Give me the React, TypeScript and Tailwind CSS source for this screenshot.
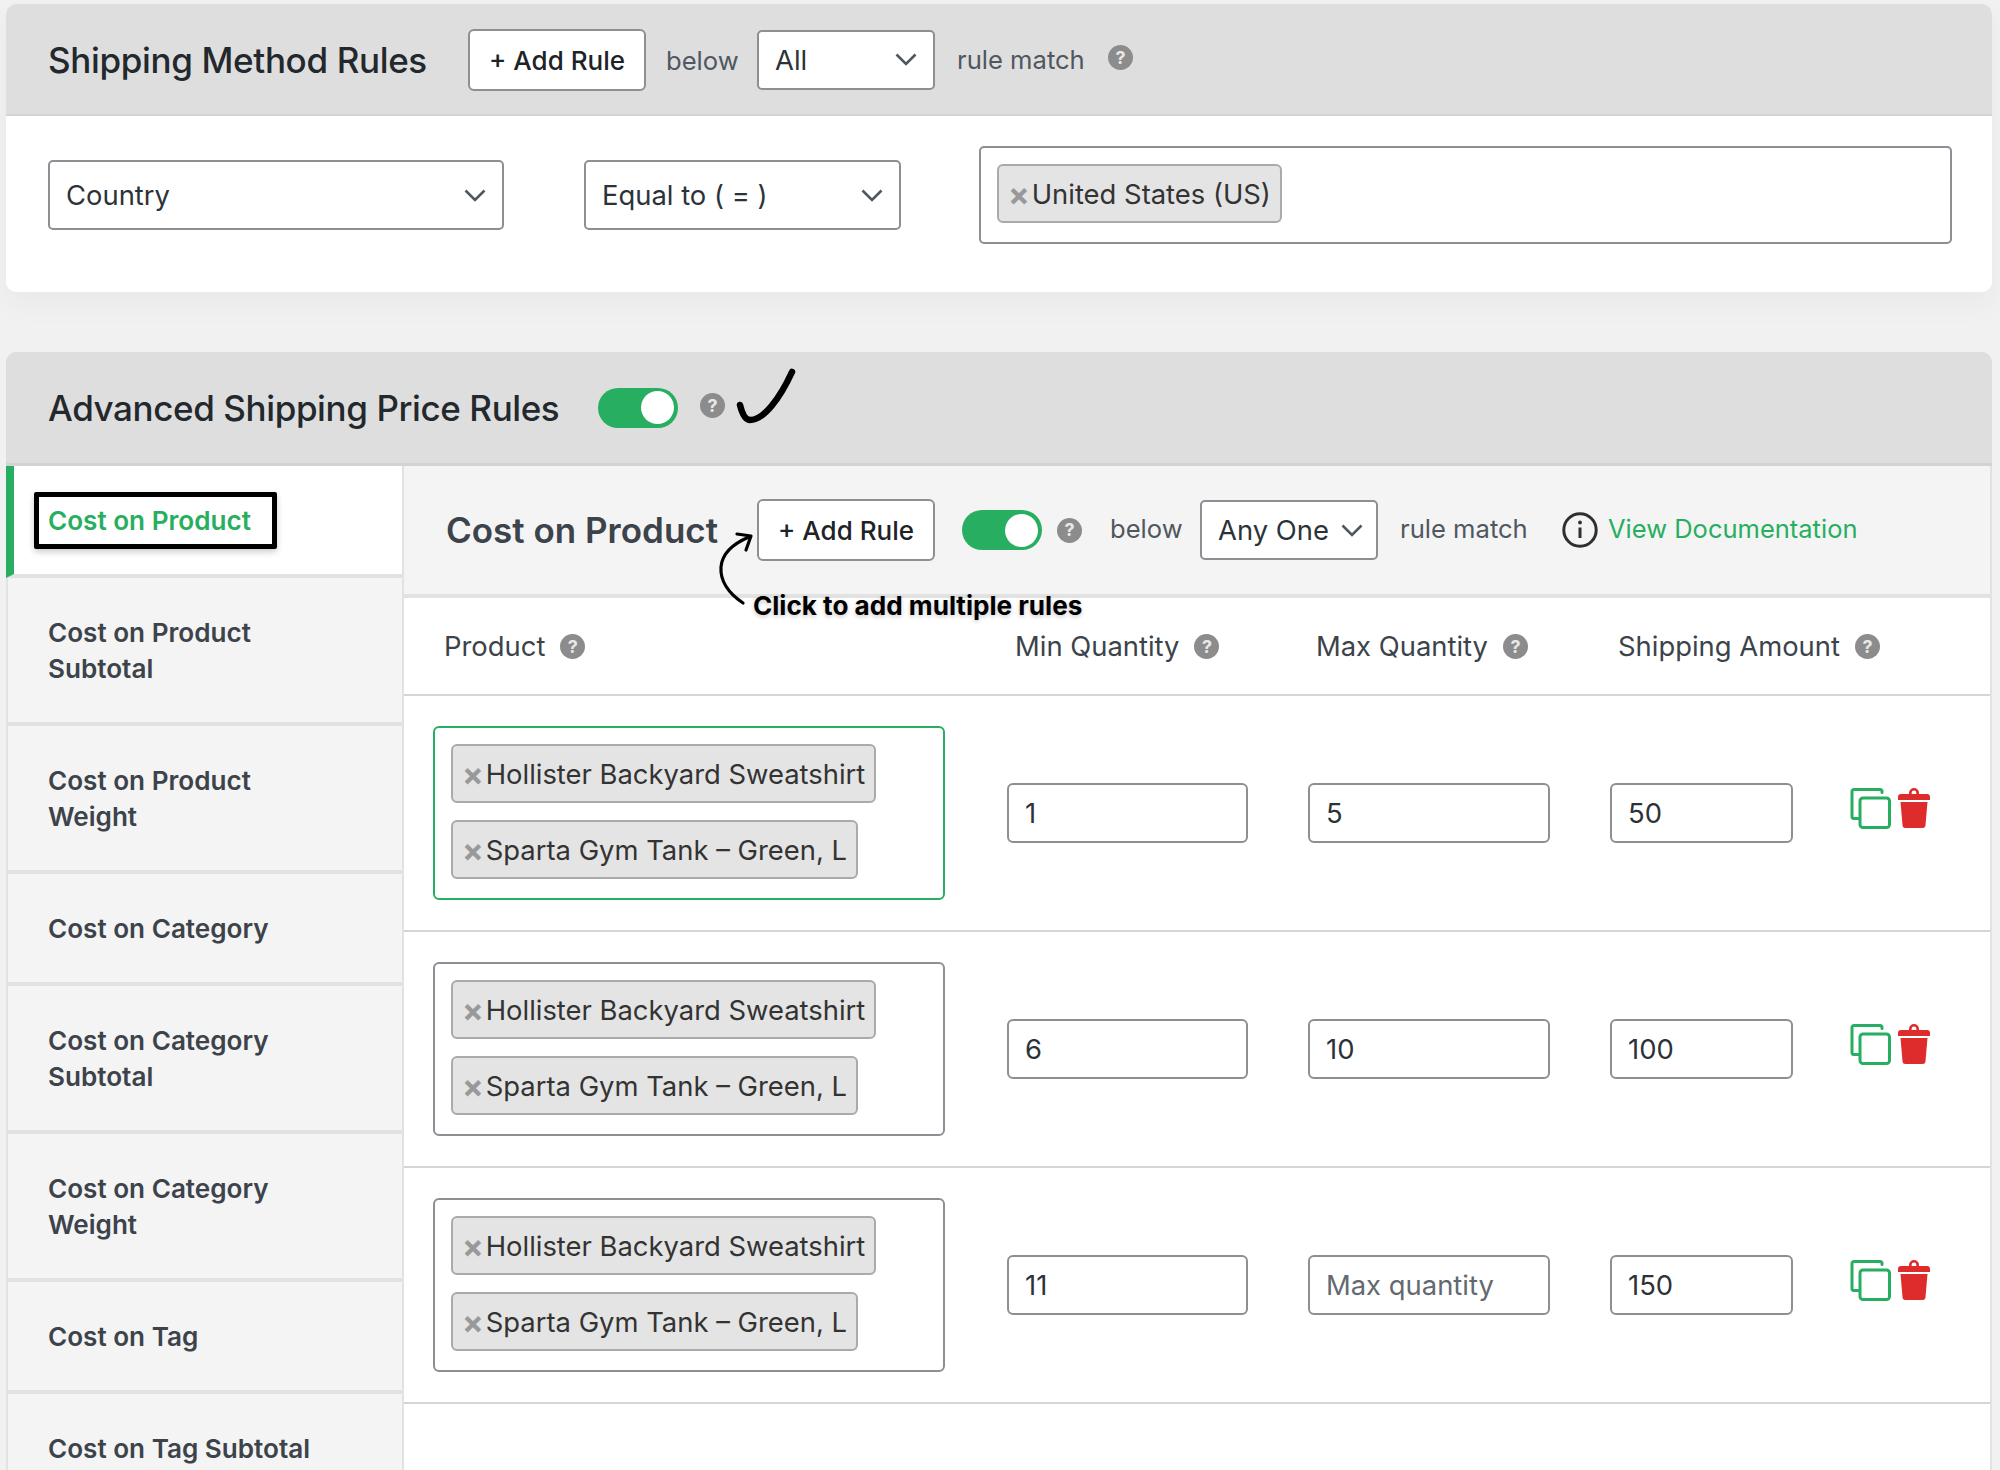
const sideItems = [
  { label: ["Cost on Product"], active: true },
  { label: ["Cost on Product", "Subtotal"] },
  { label: ["Cost on Product", "Weight"] },
  { label: ["Cost on Category"] },
  { label: ["Cost on Category", "Subtotal"] },
  { label: ["Cost on Category", "Weight"] },
  { label: ["Cost on Tag"] },
  { label: ["Cost on Tag Subtotal"] },
]

const rows = [
  { min: "1", max: "5", amount: "50", active: true },
  { min: "6", max: "10", amount: "100" },
  { min: "11", max: "", amount: "150" },
]

function Help({ className = "" }: { className?: string }) {
  return (
    <span className={`flex h-[25px] w-[25px] shrink-0 items-center justify-center rounded-full bg-[#8c8c8c] text-[18px] leading-none font-bold text-[#e8e8e8] ${className}`}>
      ?
    </span>
  )
}

function Toggle() {
  return (
    <div className="flex h-[40px] w-[80px] shrink-0 items-center justify-end rounded-full bg-[#27ae60] pr-[4px]">
      <div className="h-[33px] w-[33px] rounded-full bg-white" />
    </div>
  )
}

function AddRule({ className = "" }: { className?: string }) {
  return (
    <button className={`h-[62px] w-[178px] shrink-0 rounded-[6px] border-2 border-[#8c8f94] bg-white text-[26px] font-medium text-[#1d2327] ${className}`}>
      + Add Rule
    </button>
  )
}

function Select({ label, className, chevronGap }: { label: string; className: string; chevronGap?: string }) {
  return (
    <div className={`flex shrink-0 items-center rounded-[5px] border-2 border-[#8c8f94] bg-white text-[27.4px] text-[#2c3338] ${className}`}>
      <span className="pt-[2px]">{label}</span>
      <svg width="22" height="13" viewBox="0 0 22 13" fill="none" stroke="#50575e" strokeWidth="2.6" className={chevronGap ?? "ml-auto"}>
        <path d="M1.5 1.5 11 11l9.5-9.5" />
      </svg>
    </div>
  )
}

function Tag({ label }: { label: string }) {
  return (
    <div className="flex h-[59px] items-center rounded-[6px] border-2 border-[#aaaaaa] bg-[#e4e4e4] pt-[2px] pr-[9px] pl-[9px] text-[27.4px] text-[#333]">
      <span className="mr-[2px] text-[32px] leading-none font-bold text-[#999]">×</span>
      <span>{label}</span>
    </div>
  )
}

function ValueInput({ value, className }: { value: string; className: string }) {
  return (
    <input
      readOnly
      value={value}
      placeholder="Max quantity"
      className={`h-[60px] shrink-0 rounded-[6px] border-2 border-[#8c8f94] bg-white px-[16px] text-[27.4px] text-[#2c3338] placeholder:text-[#646970] ${className}`}
    />
  )
}

function CopyIcon() {
  return (
    <svg width="41" height="41" viewBox="0 0 41 41" fill="none" stroke="#27ae60" strokeWidth="3">
      <path d="M32 4.5V3.5a2 2 0 0 0-2-2H4a2 2 0 0 0-2 2v25a2 2 0 0 0 2 2h4" strokeLinecap="round" />
      <rect x="10" y="10" width="29.5" height="29.5" rx="3" />
    </svg>
  )
}

function TrashIcon() {
  return (
    <svg width="32" height="40" viewBox="0 0 32 40" fill="#de2b2b">
      <path d="M11 7V5a5 5 0 0 1 10 0v2h-2.6V5a2.4 2.4 0 0 0-4.8 0v2z" />
      <path d="M3 6h26a3 3 0 0 1 3 3v3H0V9a3 3 0 0 1 3-3z" />
      <path d="M2.5 14h27l-2 23a3 3 0 0 1-3 3h-17a3 3 0 0 1-3-3z" />
    </svg>
  )
}

export default function App() {
  return (
    <div className="relative h-[1470px] overflow-hidden bg-[#f1f1f1] pt-[4px] pr-[8px] pl-[6px] [font-family:Inter,sans-serif]">
      {/* shipping method rules */}
      <div className="overflow-hidden rounded-[10px] bg-white shadow-[0_12px_30px_rgba(0,0,0,0.04)]">
        <div className="flex h-[112px] items-center border-b-2 border-[#d3d3d3] bg-[#dedede] pl-[42px]">
          <h2 className="mt-[2px] w-[420px] shrink-0 text-[35px] font-medium tracking-[-0.35px] text-[#23282d]">Shipping Method Rules</h2>
          <AddRule className="mt-[2px]" />
          <span className="mt-[4px] ml-[20px] w-[91px] shrink-0 text-[25.6px] text-[#50575e]">below</span>
          <Select label="All" className="mt-[1px] h-[60px] w-[178px] px-[16px]" />
          <span className="mt-[2px] ml-[22px] w-[151px] shrink-0 text-[25.6px] text-[#50575e]">rule match</span>
          <Help className="-mt-[3px]" />
        </div>
        <div className="flex h-[176px] items-start pt-[30px] pl-[42px]">
          <Select label="Country" className="mt-[14px] h-[70px] w-[456px] px-[16px]" />
          <Select label="Equal to ( = )" className="mt-[14px] ml-[80px] h-[70px] w-[317px] px-[16px]" />
          <div className="ml-[78px] flex h-[98px] w-[973px] items-start rounded-[5px] border-2 border-[#8c8f94] pt-[16px] pl-[16px]">
            <Tag label="United States (US)" />
          </div>
        </div>
      </div>

      {/* advanced price rules */}
      <div className="mt-[60px] overflow-hidden rounded-t-[10px]">
        <div className="flex h-[114px] items-center border-b-[3px] border-[#d3d3d3] bg-[#dedede] pl-[42px]">
          <h2 className="mt-[1px] w-[550px] shrink-0 text-[35px] font-medium tracking-[-0.4px] text-[#23282d]">Advanced Shipping Price Rules</h2>
          <Toggle />
          <Help className="-mt-[4px] ml-[22px]" />
        </div>
        <div className="flex">
          <div className="w-[398px] shrink-0">
            {sideItems.map((item) => (
              <div
                key={item.label.join(" ")}
                className={`flex items-center border-r-2 border-b-4 border-[#e2e2e2] pt-[2px] text-[26.1px] leading-[36px] font-semibold ${
                  item.active
                    ? "h-[112px] border-l-8 border-l-[#27ae60] bg-white pl-[34px] text-[#27ae60]"
                    : `border-l-2 bg-[#f4f4f4] pl-[40px] text-[#3c434a] ${item.label.length > 1 ? "h-[148px]" : "h-[112px]"}`
                }`}
              >
                <div>
                  {item.label.map((line) => (
                    <div key={line}>{line}</div>
                  ))}
                </div>
              </div>
            ))}
          </div>

          <div className="flex-1 border-r-2 border-[#e2e2e2] bg-white">
            <div className="flex h-[132px] items-center border-b-4 border-[#e2e2e2] bg-[#f4f4f4] pl-[42px]">
              <h3 className="w-[311px] shrink-0 text-[35px] font-semibold text-[#3c434a]">Cost on Product</h3>
              <AddRule />
              <div className="ml-[27px]">
                <Toggle />
              </div>
              <Help className="ml-[15px]" />
              <span className="-mt-[2px] ml-[28px] w-[90px] shrink-0 text-[25.6px] text-[#50575e]">below</span>
              <Select label="Any One" className="h-[60px] w-[178px] pl-[16px]" chevronGap="ml-[12px]" />
              <span className="-mt-[1px] ml-[22px] w-[162px] shrink-0 text-[25.6px] text-[#50575e]">rule match</span>
              <svg width="36" height="36" viewBox="0 0 36 36" fill="none" stroke="#2f2f2f" className="shrink-0">
                <circle cx="18" cy="18" r="16.2" strokeWidth="3" />
                <path d="M18 15.5V26" strokeWidth="3" />
                <circle cx="18" cy="10.5" r="1.9" fill="#2f2f2f" stroke="none" />
              </svg>
              <a className="-mt-[2px] ml-[10px] text-[25.5px] text-[#27ae60]">View Documentation</a>
            </div>

            <div className="flex h-[98px] items-center border-b-2 border-[#d5d5d5] pt-[2px] text-[27.4px] text-[#3c434a]">
              <div className="flex w-[611px] shrink-0 items-center pl-[40px]">
                Product
                <Help className="ml-[15px]" />
              </div>
              <div className="flex w-[301px] shrink-0 items-center">
                Min Quantity
                <Help className="ml-[15px]" />
              </div>
              <div className="flex w-[302px] shrink-0 items-center">
                Max Quantity
                <Help className="ml-[15px]" />
              </div>
              <div className="flex items-center">
                Shipping Amount
                <Help className="ml-[15px]" />
              </div>
            </div>

            {rows.map((row) => (
              <div key={row.amount} className="flex h-[236px] items-center border-b-2 border-[#d5d5d5] pl-[29px]">
                <div className={`flex h-[174px] w-[512px] shrink-0 flex-col items-start gap-[17px] rounded-[6px] border-2 pt-[16px] pl-[16px] ${row.active ? "border-[#27ae60]" : "border-[#8c8f94]"}`}>
                  <Tag label="Hollister Backyard Sweatshirt" />
                  <Tag label="Sparta Gym Tank – Green, L" />
                </div>
                <ValueInput value={row.min} className="ml-[62px] w-[241px]" />
                <ValueInput value={row.max} className="ml-[60px] w-[242px]" />
                <ValueInput value={row.amount} className="ml-[60px] w-[183px]" />
                <div className="mb-[10px] ml-[57px] flex items-center gap-[7px]">
                  <CopyIcon />
                  <TrashIcon />
                </div>
              </div>
            ))}
          </div>
        </div>
      </div>

      {/* annotations drawn over the screenshot */}
      <div className="absolute top-[492px] left-[34px] h-[57px] w-[243px] rounded-[2px] border-[5px] border-black shadow-[0_3px_6px_rgba(0,0,0,0.2)]" />
      <svg className="absolute top-[365px] left-[732px]" width="70" height="65" viewBox="0 0 70 65" fill="none" stroke="#000" strokeWidth="6.5" strokeLinecap="round">
        <path d="M8 40c2 8 5 15 10 15 14 0 30-22 42-48" />
      </svg>
      <svg className="absolute top-[525px] left-[712px]" width="50" height="85" viewBox="0 0 50 85" fill="none" stroke="#000" strokeWidth="3.2" strokeLinecap="round" strokeLinejoin="round">
        <path d="M31 78C16 68 8 55 9 42c1-12 9-22 28-30" />
        <path d="M25 9l14 2-5 14" />
      </svg>
      <div className="absolute top-[590px] left-[753px] text-[26.1px] leading-[32px] font-bold text-black [text-shadow:0_2px_4px_rgba(0,0,0,0.2)]">
        Click to add multiple rules
      </div>
    </div>
  )
}
